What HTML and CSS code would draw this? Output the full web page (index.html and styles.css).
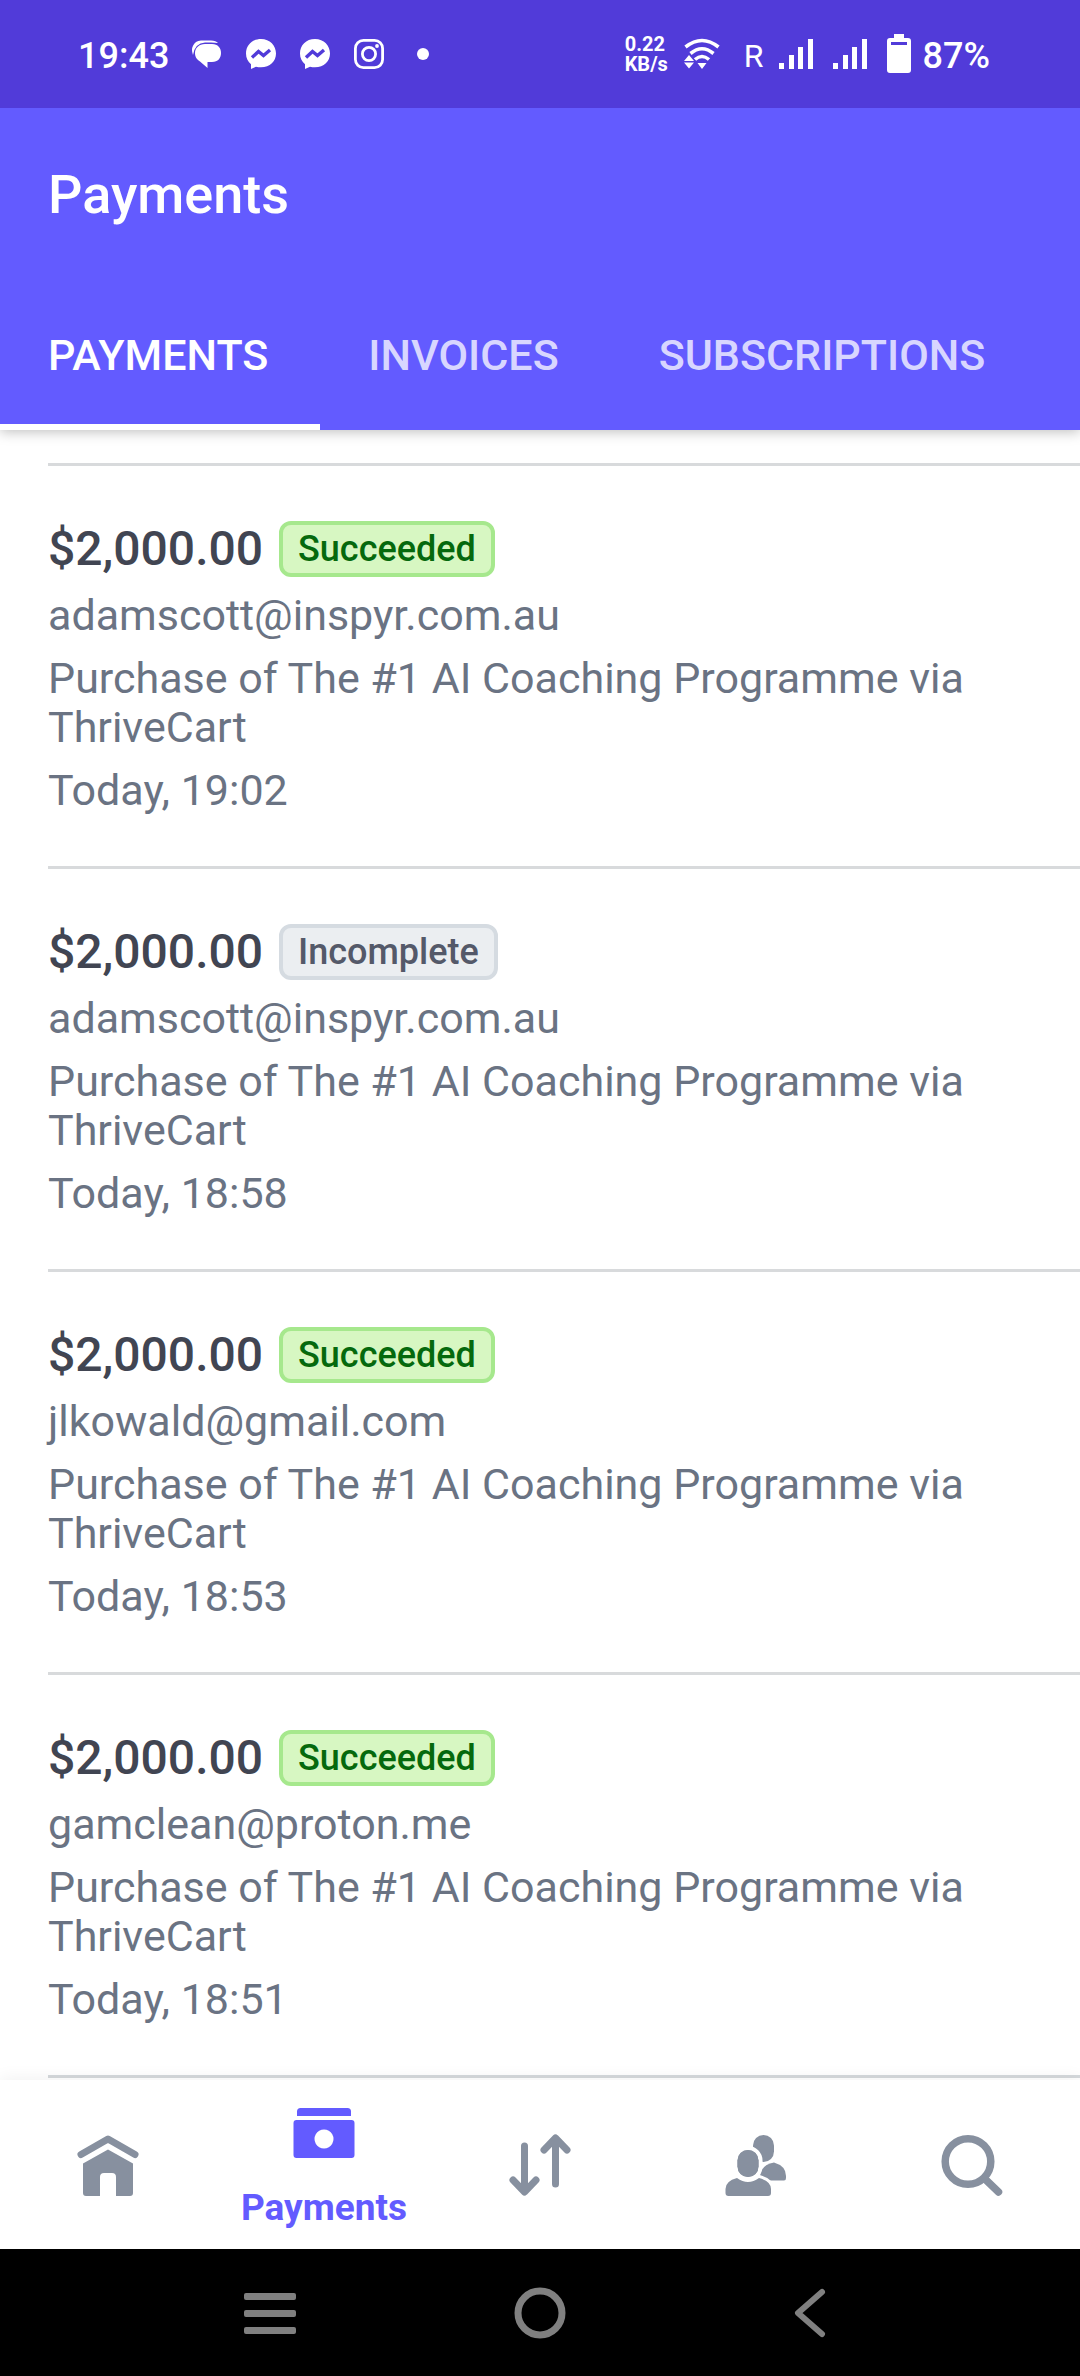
FILE: index.html
```html
<!DOCTYPE html>
<html lang="en">
<head>
<meta charset="utf-8">
<meta name="viewport" content="width=device-width, initial-scale=1">
<title>Payments</title>
<link rel="stylesheet" href="styles.css">
</head>
<body>
<div class="status-bar">
  <div class="status-left">
    <span class="status-text">19:43</span>
    <svg class="status-icon" viewBox="0 0 32 32" fill="#fff"><path d="M2 17 Q-1 9 5 4 Q7 2.500 10 2.500 H20 Q25 2.500 27 5 Q24 4.500 20 4.500 H14 Q4 5 2 17z"/><path d="M14 6 H21 C27 6 30 10 30 15 S27 24 21 24 H16.500 V30 L9 23.500 C5 21 4 18 4 15 C4 10 8 6 14 6z"/></svg>
    <svg class="status-icon" viewBox="0 0 32 32"><path d="M16 1C7 1 1 7.300 1 15.500c0 4.500 1.800 8 5 10.700V31l5-2.300c1.600.5 3.200.6 5 .6 9 0 15-6 15-13.800S25 1 16 1z" fill="#fff"/><path d="M7 19.500l6.500-6 5 4 6.500-5.500" fill="none" stroke="#513bd9" stroke-width="3.400"/></svg>
    <svg class="status-icon" viewBox="0 0 32 32"><path d="M16 1C7 1 1 7.300 1 15.500c0 4.500 1.800 8 5 10.700V31l5-2.300c1.600.5 3.200.6 5 .6 9 0 15-6 15-13.800S25 1 16 1z" fill="#fff"/><path d="M7 19.500l6.500-6 5 4 6.500-5.500" fill="none" stroke="#513bd9" stroke-width="3.400"/></svg>
    <svg class="status-icon" viewBox="0 0 32 32" fill="none" stroke="#fff" stroke-width="2.800"><rect x="2.400" y="2.400" width="27.200" height="27.200" rx="8"/><circle cx="16" cy="16" r="6.600"/><circle cx="24" cy="8" r="1.900" fill="#fff" stroke="none"/></svg>
    <svg class="status-icon" viewBox="0 0 32 32" fill="#fff"><circle cx="16" cy="16" r="6"/></svg>
  </div>
  <div class="status-right">
    <div class="speed"><span>0.22</span><span>KB/s</span></div>
    <svg class="wifi" viewBox="0 0 36 32" fill="none" stroke="#fff" stroke-width="3.600"><path d="M1.500 9 Q18 -4 34.500 9"/><path d="M6.500 15.500 Q18 6 29.500 15.500"/><path d="M11 21.500 Q18 15.500 25 21.500"/><path d="M0 24.500h10l-5 6zM0 23l5-6 5 6zM13.500 25h9l-4.500 6z" fill="#fff" stroke="none"/></svg>
    <span class="roaming">R</span>
    <svg class="signal" viewBox="0 0 34 32" fill="#fff"><path d="M0 25h5v6H0zM10 17h5v14h-5zM19 9h5v22h-5zM29 1h5v30h-5z"/></svg>
    <svg class="signal" viewBox="0 0 34 32" fill="#fff"><path d="M0 25h5v6H0zM10 17h5v14h-5zM19 9h5v22h-5zM29 1h5v30h-5z"/></svg>
    <svg class="battery" viewBox="0 0 24 40" fill="#fff"><path d="M7 0h10v4h4q3 0 3 3v1H0V7q0-3 3-3h4zM0 8h4v3h16V8h4v28q0 3-3 3H3q-3 0-3-3z"/></svg>
    <span class="status-text">87%</span>
  </div>
</div>
<header class="app-header">
  <h1 class="title">Payments</h1>
  <nav class="tabs">
    <a class="tab tab-active" href="#payments">PAYMENTS</a>
    <a class="tab" href="#invoices">INVOICES</a>
    <a class="tab" href="#subscriptions">SUBSCRIPTIONS</a>
  </nav>
</header>
<main class="content">
  <ul class="payments">
    <li class="payment">
      <div class="payment-top"><span class="amount">$2,000.00</span><span class="badge badge-succeeded">Succeeded</span></div>
      <p class="detail">adamscott@inspyr.com.au</p>
      <p class="detail">Purchase of The #1 AI Coaching Programme via ThriveCart</p>
      <p class="detail">Today, 19:02</p>
    </li>
    <li class="payment">
      <div class="payment-top"><span class="amount">$2,000.00</span><span class="badge badge-incomplete">Incomplete</span></div>
      <p class="detail">adamscott@inspyr.com.au</p>
      <p class="detail">Purchase of The #1 AI Coaching Programme via ThriveCart</p>
      <p class="detail">Today, 18:58</p>
    </li>
    <li class="payment">
      <div class="payment-top"><span class="amount">$2,000.00</span><span class="badge badge-succeeded">Succeeded</span></div>
      <p class="detail">jlkowald@gmail.com</p>
      <p class="detail">Purchase of The #1 AI Coaching Programme via ThriveCart</p>
      <p class="detail">Today, 18:53</p>
    </li>
    <li class="payment">
      <div class="payment-top"><span class="amount">$2,000.00</span><span class="badge badge-succeeded">Succeeded</span></div>
      <p class="detail">gamclean@proton.me</p>
      <p class="detail">Purchase of The #1 AI Coaching Programme via ThriveCart</p>
      <p class="detail">Today, 18:51</p>
    </li>
  </ul>
</main>
<nav class="app-nav">
  <a class="nav-item" href="#home" aria-label="Home">
    <svg class="nav-icon" viewBox="0 0 64 64" fill="#87909f"><path d="M5 21.500 L32 6 L59 21.500" fill="none" stroke="#87909f" stroke-width="7" stroke-linecap="round" stroke-linejoin="round"/><path d="M32 16.500 L57 30.500 V60 Q57 63 54 63 H40 V44 Q40 40 36 40 H28 Q24 40 24 44 V63 H10 Q7 63 7 60 V30.500z"/></svg>
  </a>
  <a class="nav-item nav-active" href="#payments">
    <svg class="nav-icon" viewBox="0 0 64 64" fill="#635bff"><path d="M5 15V10.500Q5 7 8.500 7H55.500Q59 7 59 10.500V15z"/><path fill-rule="evenodd" d="M4.500 19H59.500Q62.500 19 62.500 22V54Q62.500 57 59.500 57H4.500Q1.500 57 1.500 54V22Q1.500 19 4.500 19zM32 28.500a9.500 9.500 0 1 0 .01 0z"/></svg>
    <span class="nav-label">Payments</span>
  </a>
  <a class="nav-item" href="#balances" aria-label="Balances">
    <svg class="nav-icon" viewBox="0 0 64 64" fill="none" stroke="#87909f" stroke-width="7" stroke-linecap="round" stroke-linejoin="round"><path d="M16.500 13V58M5 47L16.500 59L28 47M47.500 51V6M36 17L47.500 5L59 17"/></svg>
  </a>
  <a class="nav-item" href="#customers" aria-label="Customers">
    <svg class="nav-icon" viewBox="0 0 64 64" fill="#87909f"><rect x="29" y="2" width="21" height="27" rx="10.500"/><path d="M36 45 Q36 32 50 29.500 Q62 33 62 43 V45 Q62 47.500 60 47.500 H38z"/><rect x="13.500" y="17" width="21" height="27" rx="10.500" stroke="#fff" stroke-width="8" paint-order="stroke"/><path d="M1.500 60 V56 Q1.500 48 13 45 Q24 53 35 45 Q47 48 47 56 V60 Q47 63 44 63 H4.500 Q1.500 63 1.500 60z" stroke="#fff" stroke-width="6" paint-order="stroke"/><rect x="13.500" y="17" width="21" height="27" rx="10.500"/></svg>
  </a>
  <a class="nav-item" href="#search" aria-label="Search">
    <svg class="nav-icon" viewBox="0 0 64 64" fill="none" stroke="#87909f" stroke-width="7.500" stroke-linecap="round"><circle cx="28" cy="28.500" r="22.800"/><path d="M45 46L58.500 59"/></svg>
  </a>
</nav>
<div class="system-nav">
  <button class="system-button" type="button" aria-label="Recent apps"><svg class="system-icon" viewBox="0 0 56 56" fill="#808080"><rect x="2" y="8" width="52" height="7" rx="2"/><rect x="2" y="25" width="52" height="7" rx="2"/><rect x="2" y="42" width="52" height="7" rx="2"/></svg></button>
  <button class="system-button" type="button" aria-label="Home screen"><svg class="system-icon" viewBox="0 0 56 56" fill="none" stroke="#808080" stroke-width="7"><circle cx="28" cy="28" r="22"/></svg></button>
  <button class="system-button" type="button" aria-label="Back"><svg class="system-icon" viewBox="0 0 56 56" fill="none" stroke="#808080" stroke-width="6" stroke-linecap="round" stroke-linejoin="round"><path d="M40 7L16 28L40 49"/></svg></button>
</div>
</body>
</html>
```
FILE: styles.css
```css
* {
  box-sizing: border-box;
}

body {
  display: flex;
  flex-direction: column;
  min-height: 100vh;
  margin: 0;
  background: #fff;
  color: #6a7383;
  font-family: Roboto, "Liberation Sans", sans-serif;
}

svg {
  display: block;
  flex: none;
}

a {
  color: inherit;
  text-decoration: none;
}

/* Phone status bar */
.status-bar {
  position: relative;
  z-index: 1;
  display: flex;
  align-items: center;
  justify-content: space-between;
  height: 108px;
  padding: 0 90px 0 78px;
  background: #513bd9;
  color: #fff;
}

.status-left,
.status-right {
  display: flex;
  align-items: center;
}

.status-left {
  gap: 22px;
}

.status-text {
  padding-top: 4px;
  font-size: 36px;
  font-weight: 500;
}

.status-icon {
  width: 32px;
  height: 32px;
}

.speed {
  display: flex;
  flex-direction: column;
  font-size: 20px;
  font-weight: 700;
  line-height: 20px;
}

.wifi {
  width: 36px;
  height: 32px;
  margin-left: 16px;
}

.roaming {
  margin: 0 15px 0 24px;
  padding-top: 3px;
  font-size: 32px;
}

.signal {
  width: 34px;
  height: 32px;
  margin-right: 20px;
}

.battery {
  width: 24px;
  height: 40px;
  margin-right: 12px;
}

/* App header */
.app-header {
  position: relative;
  background: #635bff;
  box-shadow: 0 2px 12px rgba(0, 0, 0, 0.25);
  color: #fff;
}

.title {
  margin: 0;
  padding: 55px 48px 0;
  font-size: 54px;
  font-weight: 500;
  line-height: 64px;
}

.tabs {
  display: flex;
  margin-top: 59px;
}

.tab {
  padding: 44px 52px 44px 48px;
  border-bottom: 6px solid transparent;
  color: #d8d6ff;
  font-size: 43px;
  font-weight: 500;
  line-height: 50px;
}

.tab-active {
  border-color: #fff;
  color: #fff;
}

/* Payment list */
.content {
  flex: 1;
  padding: 33px 0 2px 48px;
}

.payments {
  margin: 0;
  padding: 0;
  border-bottom: 3px solid #d5d9dc;
  list-style: none;
}

.payment {
  display: flex;
  flex-direction: column;
  gap: 14px;
  padding: 55px 48px 51px 0;
  border-top: 3px solid #d8dadc;
}

.payment-top {
  display: flex;
  align-items: center;
  gap: 16px;
}

.amount {
  color: #414552;
  font-size: 48px;
  font-weight: 500;
  line-height: 56px;
}

.badge {
  padding: 3px 15px;
  border: 4px solid;
  border-radius: 12px;
  font-size: 36px;
  font-weight: 500;
  line-height: 42px;
}

.badge-succeeded {
  border-color: #a6e88d;
  background: #d7f7c2;
  color: #05690d;
}

.badge-incomplete {
  border-color: #d5dbe1;
  background: #ebeef1;
  color: #545969;
}

.detail {
  margin: 0;
  font-size: 43px;
  line-height: 49px;
}

/* App navigation */
.app-nav {
  display: grid;
  grid-template-columns: repeat(5, 1fr);
  height: 169px;
  background: #fff;
  box-shadow: 0 -2px 16px rgba(0, 0, 0, 0.06);
}

.nav-item {
  display: flex;
  flex-direction: column;
  align-items: center;
  justify-content: center;
}

.nav-icon {
  width: 64px;
  height: 64px;
}

.nav-active {
  gap: 22px;
}

.nav-label {
  color: #635bff;
  font-size: 37px;
  font-weight: 700;
  line-height: 42px;
}

/* Phone navigation */
.system-nav {
  display: grid;
  grid-template-columns: repeat(3, 1fr);
  height: 127px;
  padding: 0 12.5%;
  background: #000;
}

.system-button {
  display: flex;
  align-items: center;
  justify-content: center;
  padding: 0;
  border: 0;
  background: none;
}

.system-icon {
  width: 56px;
  height: 56px;
}
```
